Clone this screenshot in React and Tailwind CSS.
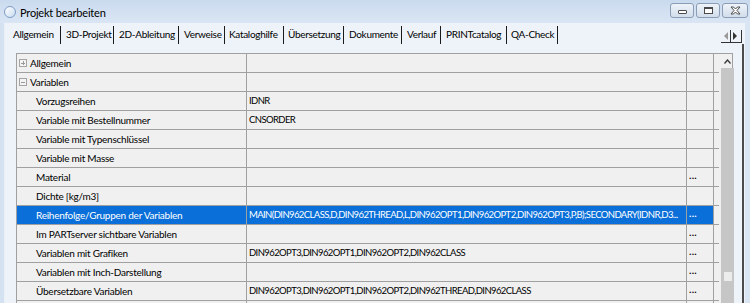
import React from 'react';

const tabs = [
    { label: 'Allgemein', w: 'w-[55px]', pl: 'pl-[8px]' },
    { label: '3D-Projekt', w: 'w-[52px]', pl: 'pl-[5px]' },
    { label: '2D-Ableitung', w: 'w-[64px]', pl: 'pl-[5px]' },
    { label: 'Verweise', w: 'w-[45px]', pl: 'pl-[5px]' },
    { label: 'Kataloghilfe', w: 'w-[58px]', pl: 'pl-[4px]' },
    { label: 'Übersetzung', w: 'w-[59px]', pl: 'pl-[4px]' },
    { label: 'Dokumente', w: 'w-[57px]', pl: 'pl-[5px]' },
    { label: 'Verlauf', w: 'w-[38px]', pl: 'pl-[5px]' },
    { label: 'PRINTcatalog', w: 'w-[65px]', pl: 'pl-[5px]' },
    { label: 'QA-Check', w: 'w-[50px]', pl: 'pl-[4px]' },
];

const rows = [
    { name: 'Allgemein', group: 'plus' },
    { name: 'Variablen', group: 'minus' },
    { name: 'Vorzugsreihen', value: 'IDNR' },
    { name: 'Variable mit Bestellnummer', value: 'CNSORDER' },
    { name: 'Variable mit Typenschlüssel' },
    { name: 'Variable mit Masse' },
    { name: 'Material', dots: true },
    { name: 'Dichte [kg/m3]' },
    {
        name: 'Reihenfolge/Gruppen der Variablen',
        value: 'MAIN(DIN962CLASS,D,DIN962THREAD,L,DIN962OPT1,DIN962OPT2,DIN962OPT3,P,B);SECONDARY(IDNR,D3...',
        dots: true,
        selected: true,
    },
    { name: 'Im PARTserver sichtbare Variablen', dots: true },
    { name: 'Variablen mit Grafiken', value: 'DIN962OPT3,DIN962OPT1,DIN962OPT2,DIN962CLASS', dots: true },
    { name: 'Variablen mit Inch-Darstellung', dots: true },
    { name: 'Übersetzbare Variablen', value: 'DIN962OPT3,DIN962OPT1,DIN962OPT2,DIN962THREAD,DIN962CLASS', dots: true },
    { name: '' },
];

const WinButton = ({ children, w }) => (
    <div className={`${w} h-[15px] rounded-[3px] border border-[#8a9cb6] bg-gradient-to-b from-[#eef3f9] to-[#d2ddeb] flex items-center justify-center`}>
        {children}
    </div>
);

const ExpandBox = ({ open }) => (
    <div className="w-[8px] h-[8px] border border-[#a4a4a4] bg-[#f4f4f4] flex items-center justify-center relative mr-[3px]">
        <div className="w-[4px] h-px bg-[#9a9a9a]"></div>
        {!open && <div className="absolute w-px h-[4px] bg-[#9a9a9a]"></div>}
    </div>
);

const Row = ({ row }) => {
    const sel = row.selected;
    const bg = sel ? 'bg-[#0a6fd8] text-white' : 'bg-[#f0f0f0] text-black';
    return (
        <div className={`flex h-[19px] border-b border-[#a0a0a0] ${bg}`}>
            <div className={`w-[230px] shrink-0 border-r border-[#a0a0a0] flex items-center tracking-[-0.25px] ${row.group ? 'pl-[2px]' : 'pl-[19px]'}`}>
                {row.group && <ExpandBox open={row.group === 'minus'} />}
                <span className="whitespace-nowrap">{row.name}</span>
            </div>
            <div className="w-[440px] shrink-0 border-r border-[#a0a0a0] flex items-center pl-[2px] overflow-hidden text-[9.5px] tracking-[-0.6px]">
                <span className="whitespace-nowrap">{row.value}</span>
            </div>
            <div className="w-[27px] shrink-0 border-r border-[#a0a0a0] flex items-center pl-[2px]">
                {row.dots && <span className="leading-none tracking-[0.3px] font-bold mb-[4px]">...</span>}
            </div>
            <div className="w-[5px] shrink-0 bg-[#f0f0f0]"></div>
        </div>
    );
};

export default function App() {
    return (
        <div className="w-[750px] h-[303px] overflow-hidden flex flex-col bg-[#d9e5f3] text-[10px] text-black font-['Lato',sans-serif]">

            <div className="h-[23px] shrink-0 flex items-start bg-gradient-to-b from-[#cadaee] to-[#dae6f4]">
                <div className="mt-[6px] ml-[4px] w-[12px] h-[12px] rounded-full border border-[#7d9cc4] bg-gradient-to-br from-white to-[#c9dcf1]"></div>
                <span className="mt-[5px] ml-[4px] text-[11px] tracking-[-0.2px] text-black">Projekt bearbeiten</span>
                <div className="ml-auto mr-[2px] mt-[3px] flex gap-[2px]">
                    <WinButton w="w-[24px]">
                        <div className="mt-[2px] w-[9px] h-[4px] rounded-[1px] border border-[#4a4a4a] bg-white"></div>
                    </WinButton>
                    <WinButton w="w-[24px]">
                        <div className="w-[9px] h-[7px] border border-[#4a4a4a] border-t-[2px] bg-white"></div>
                    </WinButton>
                    <WinButton w="w-[26px]">
                        <svg width="11" height="9" viewBox="0 0 11 9">
                            <path d="M1 1 L3.5 1 L5.5 3 L7.5 1 L10 1 L7 4.5 L10 8 L7.5 8 L5.5 6 L3.5 8 L1 8 L4 4.5 Z" fill="#fff" stroke="#4a4a4a" strokeWidth="1" strokeLinejoin="round" />
                        </svg>
                    </WinButton>
                </div>
            </div>

            <div className="flex-1 flex min-h-0">
                <div className="w-[5px] shrink-0 bg-[#d5e2f1] border-r border-[#e9f0f8]"></div>

                <div className="flex-1 flex flex-col bg-[#eef3f9] min-w-0">

                    <div className="h-[21px] shrink-0 flex items-center pt-[2px] tracking-[-0.3px]">
                        {tabs.map((t) => (
                            <React.Fragment key={t.label}>
                                <div className={`${t.w} ${t.pl} shrink-0 whitespace-nowrap overflow-hidden`}>{t.label}</div>
                                <div className="w-px h-[18px] bg-[#1a1a1a] shrink-0"></div>
                            </React.Fragment>
                        ))}
                        <div className="ml-auto mr-[3px] mt-[4px]">
                            <svg width="21" height="15" viewBox="0 0 21 15">
                                <path d="M7 3 L3 7 L7 11 Z" fill="#9a9a9a" />
                                <rect x="9" y="1" width="1" height="13" fill="#333" />
                                <path d="M12 3 L16 7 L12 11 Z" fill="#333" />
                                <rect x="0" y="13" width="21" height="1" fill="#333" />
                                <rect x="20" y="1" width="1" height="13" fill="#333" />
                            </svg>
                        </div>
                    </div>

                    <div className="flex-1 min-h-0 pl-[11px] pt-[9px] border-r-2 border-[#4b4b4b] mr-[1px]">
                        <div className="w-[717px] h-[300px] border border-[#a0a0a0] flex bg-[#f0f0f0]">
                            <div className="w-[702px] shrink-0 flex flex-col">
                                {rows.map((r, i) => (
                                    <Row key={i} row={r} />
                                ))}
                            </div>
                            <div className="w-[13px] ml-[2px] shrink-0 flex flex-col">
                                <div className="h-[14px] flex items-center justify-center">
                                    <svg width="7" height="5" viewBox="0 0 7 5">
                                        <path d="M0.5 4.5 L3.5 1 L6.5 4.5" fill="none" stroke="#333" strokeWidth="1.2" />
                                    </svg>
                                </div>
                                <div className="h-[204px] bg-[#c6c6c6]"></div>
                                <div className="h-[9px] bg-[#c6c6c6] flex justify-center">
                                    <div className="w-[8px] h-[9px] bg-[#ececec]"></div>
                                </div>
                                <div className="flex-1 bg-[#c6c6c6]"></div>
                            </div>
                        </div>
                    </div>
                </div>

                <div className="w-[5px] shrink-0 bg-[#d9e5f3]"></div>
            </div>
        </div>
    );
}
